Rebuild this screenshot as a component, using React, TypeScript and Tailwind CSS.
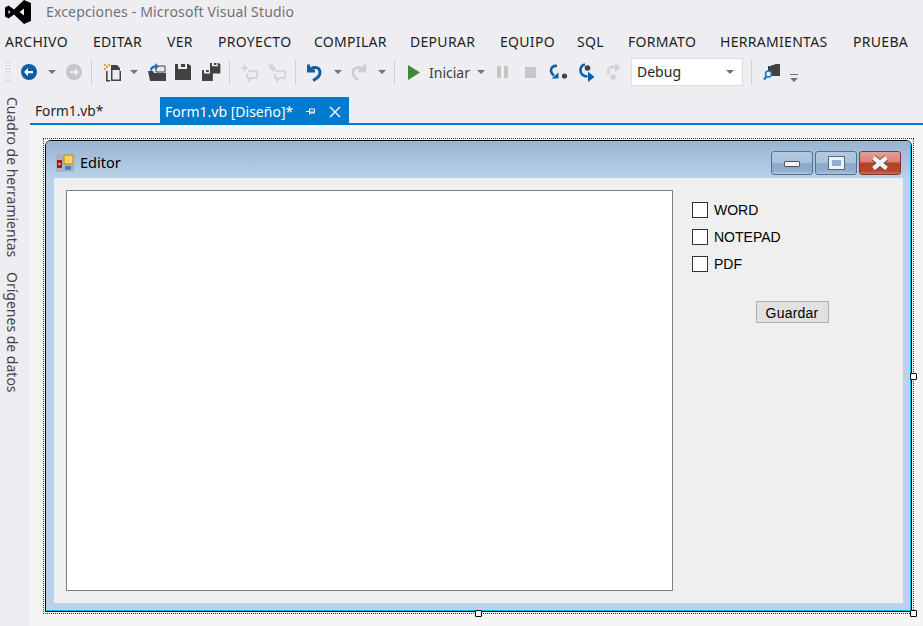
import React from 'react'

const menuItems: Array<[string, string]> = [
  ['ARCHIVO', 'w-[88px]'],
  ['EDITAR', 'w-[74px]'],
  ['VER', 'w-[51px]'],
  ['PROYECTO', 'w-[96px]'],
  ['COMPILAR', 'w-[96px]'],
  ['DEPURAR', 'w-[90px]'],
  ['EQUIPO', 'w-[77px]'],
  ['SQL', 'w-[51px]'],
  ['FORMATO', 'w-[92px]'],
  ['HERRAMIENTAS', 'w-[133px]'],
  ['PRUEBA', 'w-[60px]']
]

const Caret = ({ className = '' }: { className?: string }) => (
  <svg width="8" height="4" viewBox="0 0 8 4" className={className}>
    <path d="M0 0h8L4 4z" fill="#717171" />
  </svg>
)

const Sep = ({ className = '' }: { className?: string }) => (
  <div className={`w-px h-[25px] bg-[#ccced4] ${className}`} />
)

const Floppy = ({ x = 0, y = 0, s = 1 }: { x?: number; y?: number; s?: number }) => (
  <g transform={`translate(${x} ${y}) scale(${s})`}>
    <path d="M0 0h3v5h9V0h1.500L16 2v14H0z" fill="#424242" />
    <path d="M6 0h4v3H6z" fill="#424242" />
  </g>
)

const Bubble = () => (
  <g fill="none" stroke="#cfcfd2" strokeWidth="1.6">
    <path d="M1 5h7M4.500 1.500v7" />
    <path d="M8 8h9v7h-6l-2 3v-3H7v-4" />
  </g>
)

// Toolbar row, every glyph drawn by hand
const Toolbar = () => (
  <div className="flex items-center h-[28px]">
    <div className="ml-[5px] w-[5px] h-[22px] bg-[radial-gradient(#b9b9bd_1px,transparent_1px)] bg-[length:3px_3px]" />
    <svg width="18" height="18" viewBox="0 0 18 18" className="ml-[10px]">
      <circle cx="9" cy="9" r="8" fill="#0f5ea8" />
      <path d="M4 9l4-4v3h5v2.200H8v3z" fill="#fff" />
    </svg>
    <Caret className="ml-[10px]" />
    <svg width="18" height="18" viewBox="0 0 18 18" className="ml-[9px]">
      <circle cx="9" cy="9" r="8" fill="#c6c6c6" />
      <path d="M14 9l-4-4v3H5v2.200h5v3z" fill="#eeeef2" />
    </svg>
    <Sep className="ml-[8px]" />
    <svg width="19" height="19" viewBox="0 0 19 19" className="ml-[11px]">
      <path d="M1 1h2v2h2V1h2v2H5v2H3v2H1V5h2V3H1z" fill="#d9a93f" />
      <path d="M8 2h6l3 3v3h1v10H8zM9.500 7v9.500h7V7z" fill="#424242" />
      <path d="M3 8h1.600v9H7v1.500H3z" fill="#424242" />
    </svg>
    <Caret className="ml-[8px]" />
    <svg width="19" height="19" viewBox="0 0 19 19" className="ml-[9px]">
      <path d="M1 8h5l1 2h12v8H3z" fill="#424242" />
      <path d="M9 3h9v6H9z" fill="#e8e8ea" stroke="#424242" />
      <path d="M3 7c0-3 2-4.500 5-4.500V0l4 3.500L8 7V5C6 5 5 6 5 8z" fill="#1b75bc" />
    </svg>
    <svg width="16" height="17" viewBox="0 0 16 17" className="ml-[9px]">
      <Floppy />
    </svg>
    <svg width="19" height="18" viewBox="0 0 19 18" className="ml-[11px]">
      <Floppy x={8} y={0} s={0.65} />
      <Floppy x={0} y={7} s={0.68} />
    </svg>
    <Sep className="ml-[8px]" />
    <svg width="19" height="19" viewBox="0 0 19 19" className="ml-[10px]">
      <Bubble />
    </svg>
    <svg width="19" height="19" viewBox="0 0 19 19" className="ml-[9px]">
      <Bubble />
      <path d="M1 1l7 7" stroke="#cfcfd2" strokeWidth="1.600" />
    </svg>
    <Sep className="ml-[8px]" />
    <svg width="17" height="19" viewBox="0 0 17 19" className="ml-[10px]">
      <path d="M2.500 9V1.500M1 8h8M3 7.500c3-4.500 11-4 11 2 0 4-4 6.500-7 8" fill="none" stroke="#0f5ea8" strokeWidth="3" />
    </svg>
    <Caret className="ml-[11px]" />
    <svg width="17" height="19" viewBox="0 0 17 19" className="ml-[8px]">
      <path d="M14.500 9V1.500M16 8H8M14 7.500C11 3 3 3.500 3 9.500c0 3 2 5.500 5 7.500" fill="none" stroke="#cfcfd2" strokeWidth="3" />
    </svg>
    <Caret className="ml-[11px]" />
    <Sep className="ml-[8px]" />
    <svg width="12" height="15" viewBox="0 0 12 15" className="ml-[13px]">
      <path d="M0 0l12 7.500L0 15z" fill="#388a34" />
    </svg>
    <span className="ml-[9px] mt-[2px] w-[42px] text-[14px] text-[#3c3c3c] font-['Noto_Sans',sans-serif] leading-none whitespace-nowrap">Iniciar</span>
    <Caret className="ml-[6px]" />
    <svg width="11" height="12" viewBox="0 0 11 12" className="ml-[12px]">
      <path d="M0 0h4v12H0zM7 0h4v12H7z" fill="#c6c6c6" />
    </svg>
    <div className="ml-[17px] w-[11px] h-[11px] bg-[#c6c6c6]" />
    <svg width="19" height="17" viewBox="0 0 19 17" className="ml-[13px]">
      <path d="M8 2C4 1.500 2 3.500 2 6.500c0 2 1 3.500 3 5" fill="none" stroke="#0f5ea8" strokeWidth="2.600" />
      <path d="M2.500 14.500h7v-6z" fill="#0f5ea8" />
      <circle cx="15.500" cy="12" r="2.600" fill="#424242" />
    </svg>
    <svg width="16" height="19" viewBox="0 0 16 19" className="ml-[11px]">
      <path d="M6 1.500C3 2 1.500 4 1.500 7.500c0 3.500 2.500 6 7 6" fill="none" stroke="#0f5ea8" strokeWidth="2.600" />
      <path d="M9 8.500l6.500 5.500L9 19z" fill="#0f5ea8" />
      <circle cx="8.500" cy="5" r="2.800" fill="#424242" />
    </svg>
    <svg width="17" height="18" viewBox="0 0 17 18" className="ml-[10px]">
      <path d="M3 12V8c0-3 2-4 5-4h3" fill="none" stroke="#d4d4d6" strokeWidth="2.400" />
      <path d="M10 0l6 4.500L10 9z" fill="#d4d4d6" />
      <circle cx="8" cy="14" r="2.800" fill="#d4d4d6" />
    </svg>
    <div className="ml-[9px] w-[112px] h-[28px] bg-white border border-[#dddde6] flex items-center justify-between pl-[5px] pr-[8px]">
      <span className="text-[14px] text-[#1e1e1e] font-['Noto_Sans',sans-serif] leading-none">Debug</span>
      <Caret />
    </div>
    <Sep className="ml-[8px]" />
    <svg width="18" height="18" viewBox="0 0 18 18" className="ml-[11px]">
      <path d="M5 3h3l1-1h2l1-1h5v12H9V9H5z" fill="#424242" />
      <circle cx="5.500" cy="11" r="3" fill="#eeeef2" stroke="#1b75bc" strokeWidth="1.600" />
      <path d="M3.500 13.500L1 16.500" stroke="#1b75bc" strokeWidth="2.200" />
    </svg>
    <svg width="8" height="9" viewBox="0 0 8 9" className="ml-[9px] mt-[12px]">
      <path d="M0 0h8v1H0z" fill="#717171" />
      <path d="M0 4h8L4 8z" fill="#717171" />
    </svg>
  </div>
)

const WinButton = ({ close, children }: { close?: boolean; children: React.ReactNode }) => (
  <div
    className={`w-[42px] h-[24px] rounded-[3px] border flex items-center justify-center ${
      close
        ? 'border-[#7e3a32] bg-[linear-gradient(#e3a196_0%,#d9826f_45%,#b4412a_50%,#b5452d_85%,#c9705c_100%)]'
        : 'border-[#55708f] bg-[linear-gradient(#b4c9e0_0%,#a9c1dc_50%,#8aa8c8_52%,#8fadcd_85%,#aec6df_100%)]'
    }`}
  >
    {children}
  </div>
)

const Check = ({ label }: { label: string }) => (
  <div className="flex items-center h-[16px] mb-[11px]">
    <div className="w-[16px] h-[16px] bg-white border border-[#333]" />
    <span className="ml-[6px] text-[14px] text-black font-['Liberation_Sans',sans-serif] leading-none">{label}</span>
  </div>
)

const Handle = ({ className }: { className: string }) => (
  <div className={`absolute w-[7px] h-[7px] bg-white border border-black rounded-[1px] ${className}`} />
)

const App = () => (
  <div className="w-[923px] h-[626px] overflow-hidden bg-[#eeeef2] flex flex-col font-['Noto_Sans',sans-serif]">
    {/* Title */}
    <div className="h-[26px] shrink-0 flex items-center">
      <svg width="26" height="24" viewBox="0 0 26 24" className="ml-[5px] mb-[2px]">
        <path d="M19 0L26 3v18l-7 3L9 14.500 3.500 18.500 0 16.500v-9L3.500 5.500 9 9.500zM19 8.500L14.500 12l4.500 3.500zM3.500 10v4L5.500 12z" fill="#000" fillRule="evenodd" />
      </svg>
      <span className="ml-[15px] mb-[4px] text-[14px] tracking-[0.16px] text-[#717175] whitespace-nowrap">Excepciones - Microsoft Visual Studio</span>
    </div>

    {/* Menu */}
    <div className="h-[32px] shrink-0 flex items-center pl-[5px] pb-[2px]">
      {menuItems.map(([name, w]) => (
        <span key={name} className={`${w} shrink-0 text-[14px] tracking-[0.3px] text-[#1e1e1e] whitespace-nowrap`}>{name}</span>
      ))}
    </div>

    <Toolbar />

    <div className="flex flex-1 mt-[11px] min-h-0">
      {/* Side tabs */}
      <div className="w-[30px] shrink-0 flex flex-col items-center pr-[6px]">
        <span className="[writing-mode:vertical-rl] text-[14px] leading-none text-[#444] whitespace-nowrap">Cuadro de herramientas</span>
        <span className="[writing-mode:vertical-rl] text-[14px] leading-none text-[#444] whitespace-nowrap mt-[15px]">Orígenes de datos</span>
      </div>

      <div className="flex-1 flex flex-col min-w-0">
        {/* Tabs */}
        <div className="h-[26px] shrink-0 flex">
          <div className="w-[130px] pl-[5px] pt-[3px] flex items-center text-[13.7px] text-[#1e1e1e]">Form1.vb*</div>
          <div className="w-[189px] pl-[5px] pr-[8px] pt-[3px] bg-[#007acc] flex items-center text-[14px] text-white">
            <span className="whitespace-nowrap">Form1.vb [Diseño]*</span>
            <svg width="10" height="9" viewBox="0 0 10 9" className="ml-[13px]">
              <path d="M0 4.500h3M3.500 1.500v6M3.500 2h5v4h-5M3.500 5h5" fill="none" stroke="#fff" />
            </svg>
            <svg width="12" height="12" viewBox="0 0 12 12" className="ml-auto">
              <path d="M1 1l10 10M11 1L1 11" stroke="#fff" strokeWidth="1.400" />
            </svg>
          </div>
        </div>
        <div className="h-[2px] shrink-0 bg-[#007acc]" />

        {/* Designer surface */}
        <div className="flex-1 bg-[#f5f5f5] pl-[13px] pt-[13px]">
          <div className="relative w-[871px] h-[476px] border border-dotted border-[#333] p-px">
            <div className="h-[472px] w-[867px] border border-black rounded-t-[6px] overflow-hidden">
              <div className="h-full border-r border-b border-[#00c4ee] flex flex-col">
                <div className="h-[37px] shrink-0 bg-[linear-gradient(#99b4d1,#b9d1ea)] flex items-center pl-[10px] pr-[9px] pt-[7px]">
                  <svg width="18" height="18" viewBox="0 0 18 18">
                    <path d="M0 0h18v18H0z" fill="#a9b5c4" />
                    <path d="M1 6h5v8H1z" fill="#a01c12" />
                    <path d="M2.500 9h2v2h-2z" fill="#e8b9a8" />
                    <path d="M8 1h9v9H8z" fill="#f5d75f" stroke="#b78a1c" />
                    <path d="M9 12h6v4H9z" fill="#3f7fd6" />
                  </svg>
                  <span className="ml-[6px] text-[14.5px] text-black">Editor</span>
                  <div className="ml-auto flex gap-[2px]">
                    <WinButton>
                      <div className="w-[16px] h-[6px] bg-[#f4f4f4] border border-[#555] rounded-[1px] mt-[2px]" />
                    </WinButton>
                    <WinButton>
                      <div className="w-[15px] h-[12px] border-[3px] border-[#f0f0f0] outline outline-1 outline-[#506a88] bg-[#8fadcd]" />
                    </WinButton>
                    <WinButton close>
                      <svg width="20" height="16" viewBox="0 0 20 16">
                        <path d="M3.500 2.500l13 11M16.500 2.500l-13 11" stroke="#5a3a34" strokeWidth="6" />
                        <path d="M3.500 2.500l13 11M16.500 2.500l-13 11" stroke="#f2f2f2" strokeWidth="4.400" />
                      </svg>
                    </WinButton>
                  </div>
                </div>
                <div className="flex-1 bg-[#bad2ec] pl-[8px] pr-[7px] pb-[7px] min-h-0">
                  <div className="h-full bg-[#efefef] flex pl-[12px] pt-[12px]">
                    <div className="w-[607px] h-[401px] bg-white border border-[#808080]" />
                    <div className="ml-[19px] flex flex-col">
                      <div className="pt-[12px]">
                        <Check label="WORD" />
                        <Check label="NOTEPAD" />
                        <Check label="PDF" />
                      </div>
                      <div className="ml-[64px] mt-[18px] w-[73px] h-[22px] pt-[2px] pr-[1px] bg-[#e1e1e1] border border-[#adadad] flex items-center justify-center text-[14px] tracking-[0.2px] text-black font-['Liberation_Sans',sans-serif]">
                        Guardar
                      </div>
                    </div>
                  </div>
                </div>
              </div>
            </div>
            <Handle className="left-[431px] -bottom-[4px]" />
            <Handle className="-right-[4px] top-[234px]" />
            <Handle className="-right-[4px] -bottom-[4px]" />
          </div>
        </div>
      </div>
    </div>
  </div>
)

export default App
